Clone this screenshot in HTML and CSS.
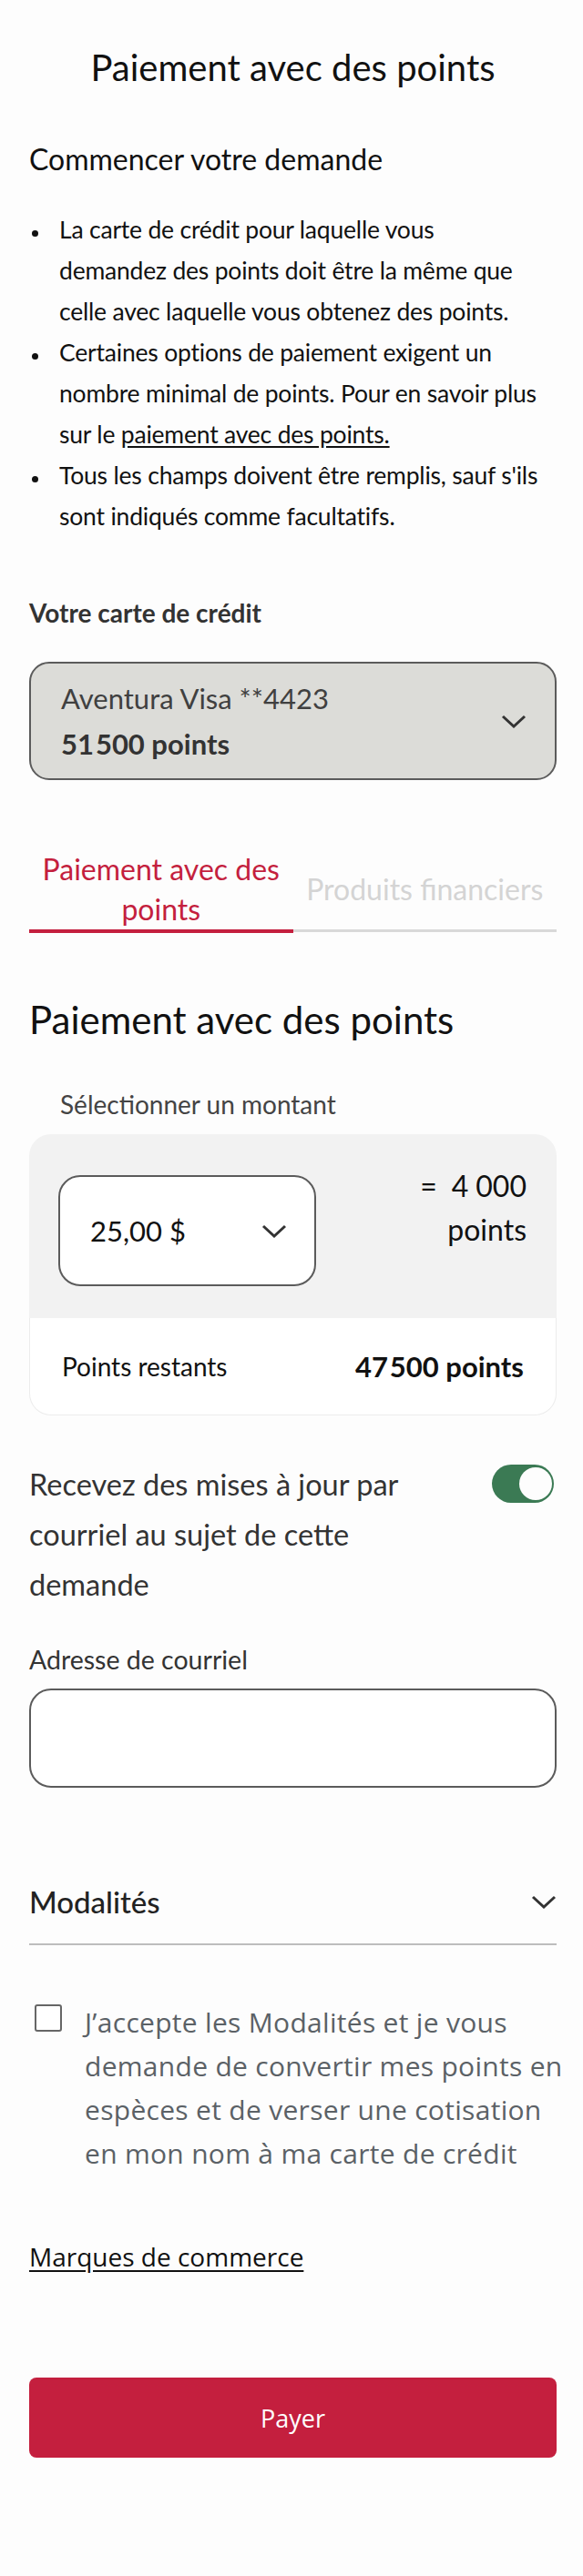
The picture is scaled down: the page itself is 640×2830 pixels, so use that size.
FILE: index.html
```html
<!DOCTYPE html>
<html lang="fr">
<head>
<meta charset="UTF-8">
<meta name="viewport" content="width=device-width, initial-scale=1.0">
<title>Paiement avec des points</title>
<link rel="stylesheet" href="styles.css">
</head>
<body>
<div class="page">
    <h1 class="page-title">Paiement avec des points</h1>

    <h2 class="intro-title">Commencer votre demande</h2>
    <!-- line breaks kept fixed so the list reads the same on every width -->
    <ul class="notes">
        <li><span>La carte de crédit pour laquelle vous<br>demandez des points doit être la même que<br>celle avec laquelle vous obtenez des points.</span></li>
        <li><span>Certaines options de paiement exigent un<br>nombre minimal de points. Pour en savoir plus<br>sur le <a href="#">paiement avec des points.</a></span></li>
        <li><span>Tous les champs doivent être remplis, sauf s'ils<br>sont indiqués comme facultatifs.</span></li>
    </ul>

    <p class="card-label">Votre carte de crédit</p>
    <div class="card-select">
        <div>
            <div class="card-name">Aventura Visa **4423</div>
            <div class="card-points">51&#8202;500 points</div>
        </div>
        <svg class="chevron" width="28" height="15" viewBox="0 0 28 15"><path d="M2 2 L14 13 L26 2" /></svg>
    </div>

    <div class="tabs">
        <div class="tab active">Paiement avec des points</div>
        <div class="tab">Produits financiers</div>
    </div>

    <h2 class="section-title">Paiement avec des points</h2>
    <p class="amount-label">Sélectionner un montant</p>
    <div class="amount-card">
        <div class="amount-top">
            <div class="amount-select">
                <span>25,00 $</span>
                <svg class="chevron" width="28" height="15" viewBox="0 0 28 15"><path d="M2 2 L14 13 L26 2" /></svg>
            </div>
            <div class="amount-points">=&ensp;4&#8239;000<br>points</div>
        </div>
        <div class="amount-bottom">
            <span>Points restants</span>
            <strong>47&#8202;500 points</strong>
        </div>
    </div>

    <div class="toggle-row">
        <p>Recevez des mises à jour par courriel au sujet de cette demande</p>
        <span class="toggle"><span class="knob"></span></span>
    </div>

    <label class="email-label" for="email">Adresse de courriel</label>
    <input id="email" class="email-input" type="email">

    <div class="terms-head">
        <span>Modalités</span>
        <svg class="chevron" width="28" height="15" viewBox="0 0 28 15"><path d="M2 2 L14 13 L26 2" /></svg>
    </div>

    <label class="consent">
        <input type="checkbox">
        <span>J’accepte les Modalités et je vous<br>demande de convertir mes points en<br>espèces et de verser une cotisation<br>en mon nom à ma carte de crédit</span>
    </label>

    <p class="trademarks"><a href="#">Marques de commerce</a></p>

    <button type="button" class="pay">Payer</button>
</div>
</body>
</html>
```

FILE: styles.css
```css
body {
    margin: 0;
    background-color: #fdfdfd;
    font-family: Lato, "Liberation Sans", sans-serif;
    color: #111;
}
.page {
    padding: 0 29px 0 32px;
}
.page-title {
    margin: 50px 0 0;
    font-size: 40px;
    line-height: 48px;
    font-weight: 400;
    text-align: center;
}
.intro-title {
    margin: 59px 0 0;
    font-size: 32px;
    line-height: 36px;
    font-weight: 400;
}
.notes {
    margin: 37px 0 0;
    padding: 0;
    list-style: none;
    font-size: 26.5px;
    line-height: 45px;
    letter-spacing: -0.2px;
    white-space: nowrap;
}
.notes li {
    display: flex;
}
.notes li::before {
    content: "";
    flex: none;
    width: 7px;
    height: 7px;
    margin: 23px 23px 0 3px;
    border-radius: 50%;
    background-color: #111;
}
.notes a {
    color: #111;
    text-underline-offset: 3px;
}
.card-label {
    margin: 67px 0 0;
    font-size: 28px;
    line-height: 32px;
    font-weight: 700;
    color: #333;
}
.chevron {
    flex: none;
    fill: none;
    stroke: #333;
    stroke-width: 3;
}
.card-select {
    margin-top: 38px;
    height: 130px;
    box-sizing: border-box;
    padding: 0 31px 0 33px;
    display: flex;
    align-items: center;
    justify-content: space-between;
    border: 2px solid #5b5b5b;
    border-radius: 22px;
    background-color: #dcdcd8;
}
.card-name {
    font-size: 31px;
    line-height: 50px;
    color: #404040;
}
.card-points {
    font-size: 31px;
    line-height: 50px;
    font-weight: 700;
    color: #333;
}
.tabs {
    margin-top: 76px;
    display: flex;
}
.tab {
    flex: 1 1 0;
    display: flex;
    align-items: center;
    justify-content: center;
    padding: 0 10px;
    margin-bottom: 1px;
    text-align: center;
    font-size: 32px;
    line-height: 44px;
    color: #d4d4d4;
    border-bottom: 3px solid #d9d9d9;
}
.tab.active {
    margin-bottom: 0;
    color: #c41f3e;
    border-bottom: 4px solid #c41f3e;
}
.section-title {
    margin: 70px 0 0;
    font-size: 42px;
    line-height: 50px;
    font-weight: 400;
}
.amount-label {
    margin: 52px 0 0;
    padding-left: 34px;
    font-size: 28px;
    line-height: 32px;
    color: #444;
}
.amount-card {
    margin-top: 17px;
}
.amount-top {
    display: flex;
    justify-content: space-between;
    align-items: flex-start;
    padding: 33px 33px 35px 32px;
    border-radius: 24px 24px 0 0;
    background-color: #f2f2f2;
}
.amount-select {
    margin-top: 12px;
    width: 283px;
    height: 122px;
    box-sizing: border-box;
    padding: 0 30px 0 33px;
    display: flex;
    align-items: center;
    justify-content: space-between;
    border: 2px solid #5b5b5b;
    border-radius: 24px;
    background-color: #fff;
    font-size: 31px;
}
.amount-points {
    text-align: right;
    font-size: 32px;
    line-height: 48px;
}
.amount-bottom {
    height: 107px;
    box-sizing: border-box;
    padding: 0 35px;
    display: flex;
    align-items: center;
    justify-content: space-between;
    border: 1px solid #ececec;
    border-top: none;
    border-radius: 0 0 24px 24px;
    background-color: #fff;
    font-size: 28px;
}
.amount-bottom strong {
    font-size: 31px;
}
.toggle-row {
    margin-top: 48px;
    display: flex;
    align-items: flex-start;
    gap: 60px;
}
.toggle-row p {
    flex: 1;
    margin: 0;
    font-size: 32.5px;
    line-height: 55px;
    color: #333;
}
.toggle {
    flex: none;
    margin: 6px 3px 0 0;
    width: 68px;
    height: 42px;
    box-sizing: border-box;
    padding: 3px 2px;
    display: flex;
    justify-content: flex-end;
    border-radius: 21px;
    background-color: #3b7a54;
}
.knob {
    width: 36px;
    height: 36px;
    border-radius: 50%;
    background-color: #fdfdfd;
}
.email-label {
    display: block;
    margin-top: 38px;
    font-size: 28.5px;
    line-height: 34px;
    color: #333;
}
.email-input {
    display: block;
    margin-top: 15px;
    width: 100%;
    height: 109px;
    box-sizing: border-box;
    border: 2px solid #5b5b5b;
    border-radius: 24px;
    background-color: #fff;
}
.terms-head {
    margin-top: 105px;
    padding-bottom: 26px;
    display: flex;
    align-items: center;
    justify-content: space-between;
    border-bottom: 2px solid #bdbdbd;
    font-size: 33px;
    line-height: 40px;
    font-weight: 500;
    color: #222;
}
.consent {
    margin-top: 61px;
    display: flex;
    align-items: flex-start;
    font-family: "Open Sans", sans-serif;
    font-size: 30px;
    line-height: 48px;
    letter-spacing: 0.3px;
    white-space: nowrap;
    color: #5b6166;
}
.consent input {
    flex: none;
    appearance: none;
    width: 30px;
    height: 30px;
    margin: 4px 25px 0 6px;
    border: 2px solid #666;
    border-radius: 3px;
    background-color: #fff;
}
.trademarks {
    margin: 72px 0 0;
    font-family: "Open Sans", sans-serif;
    font-size: 28px;
    line-height: 34px;
}
.trademarks a {
    color: #111;
    text-underline-offset: 4px;
}
.pay {
    display: block;
    width: 100%;
    height: 88px;
    margin-top: 116px;
    border: none;
    border-radius: 8px;
    background-color: #c41f3e;
    color: #fff;
    font-family: "Open Sans", sans-serif;
    font-size: 27px;
    cursor: pointer;
}
```
